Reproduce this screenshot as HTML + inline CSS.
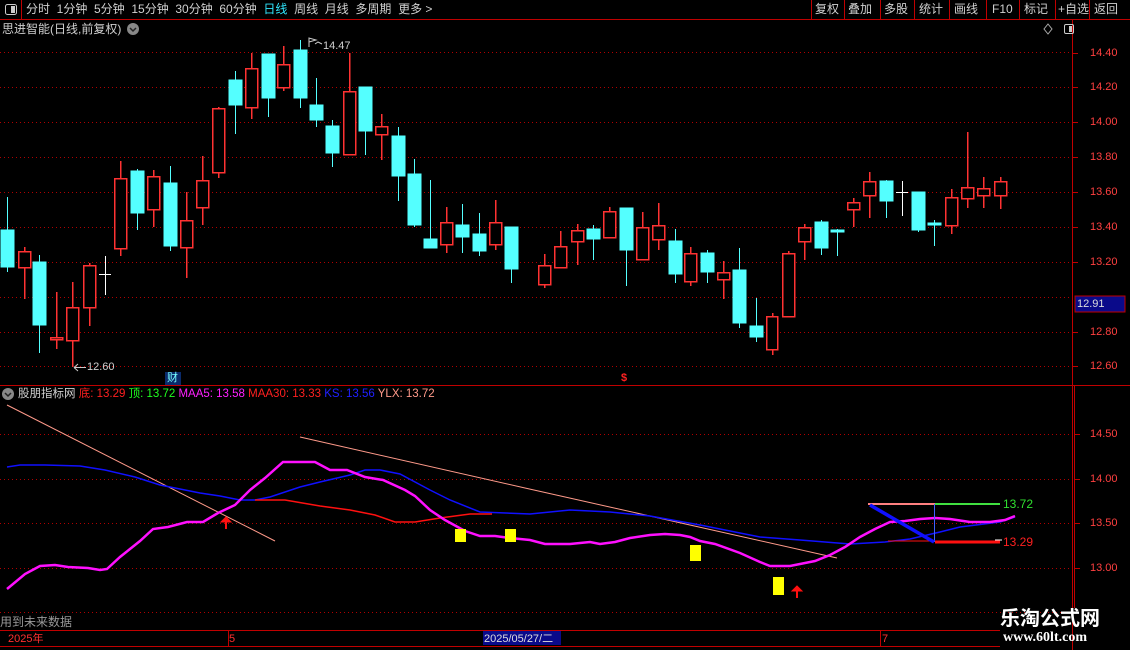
<!DOCTYPE html>
<html><head><meta charset="utf-8"><style>
body{margin:0;background:#000;width:1130px;height:650px;overflow:hidden;position:relative;font-family:"Liberation Sans","Noto Sans CJK SC",sans-serif;}
.t{position:absolute;font-size:12px;color:#d0d0d0;white-space:nowrap;line-height:14px}
</style></head><body>
<svg width="1130" height="650" style="position:absolute;left:0;top:0" xmlns="http://www.w3.org/2000/svg">
<g stroke="#b00000" stroke-width="1" stroke-dasharray="1 3" shape-rendering="crispEdges">
<line x1="0" y1="52.5" x2="1072" y2="52.5"/><line x1="0" y1="87.5" x2="1072" y2="87.5"/><line x1="0" y1="122.5" x2="1072" y2="122.5"/><line x1="0" y1="157.5" x2="1072" y2="157.5"/><line x1="0" y1="192.5" x2="1072" y2="192.5"/><line x1="0" y1="227.5" x2="1072" y2="227.5"/><line x1="0" y1="262.5" x2="1072" y2="262.5"/><line x1="0" y1="297.5" x2="1072" y2="297.5"/><line x1="0" y1="332.5" x2="1072" y2="332.5"/><line x1="0" y1="366.5" x2="1072" y2="366.5"/>
<line x1="0" y1="434.5" x2="1072" y2="434.5"/><line x1="0" y1="479.5" x2="1072" y2="479.5"/><line x1="0" y1="523.5" x2="1072" y2="523.5"/><line x1="0" y1="568.5" x2="1072" y2="568.5"/><line x1="0" y1="612.5" x2="1072" y2="612.5"/>
</g>
<g stroke="#c00000" stroke-width="1" shape-rendering="crispEdges">
<line x1="0" y1="19.5" x2="1130" y2="19.5"/>
<line x1="0" y1="385.5" x2="1130" y2="385.5"/>
<line x1="0" y1="630.5" x2="1000" y2="630.5"/>
<line x1="0" y1="646.5" x2="1000" y2="646.5"/>
<line x1="1072.5" y1="19" x2="1072.5" y2="650"/>
<line x1="1074.5" y1="385" x2="1074.5" y2="608"/>
<line x1="21.5" y1="0" x2="21.5" y2="19"/>
<line x1="811.5" y1="0" x2="811.5" y2="19"/><line x1="844.5" y1="0" x2="844.5" y2="19"/><line x1="880.5" y1="0" x2="880.5" y2="19"/><line x1="914.5" y1="0" x2="914.5" y2="19"/><line x1="949.5" y1="0" x2="949.5" y2="19"/><line x1="986.5" y1="0" x2="986.5" y2="19"/><line x1="1019.5" y1="0" x2="1019.5" y2="19"/><line x1="1055.5" y1="0" x2="1055.5" y2="19"/><line x1="1089.5" y1="0" x2="1089.5" y2="19"/>
</g>
<g stroke="#c00000" shape-rendering="crispEdges">
<line x1="1072" y1="53.5" x2="1078" y2="53.5"/><line x1="1072" y1="87.5" x2="1078" y2="87.5"/><line x1="1072" y1="122.5" x2="1078" y2="122.5"/><line x1="1072" y1="157.5" x2="1078" y2="157.5"/><line x1="1072" y1="192.5" x2="1078" y2="192.5"/><line x1="1072" y1="227.5" x2="1078" y2="227.5"/><line x1="1072" y1="262.5" x2="1078" y2="262.5"/><line x1="1072" y1="332.5" x2="1078" y2="332.5"/><line x1="1072" y1="366.5" x2="1078" y2="366.5"/>
<line x1="1074" y1="434.5" x2="1080" y2="434.5"/><line x1="1074" y1="479.5" x2="1080" y2="479.5"/><line x1="1074" y1="523.5" x2="1080" y2="523.5"/><line x1="1074" y1="568.5" x2="1080" y2="568.5"/>
<line x1="228.5" y1="630" x2="228.5" y2="646"/><line x1="880.5" y1="630" x2="880.5" y2="646"/>
</g>
<g stroke-width="1" shape-rendering="crispEdges">
<g stroke="#54ffff" fill="#54ffff">
<line x1="7.5" y1="197" x2="7.5" y2="272"/><rect x="1" y="230" width="13" height="37"/>
<line x1="39.5" y1="255" x2="39.5" y2="353"/><rect x="33" y="262" width="13" height="63"/>
<line x1="137.5" y1="169" x2="137.5" y2="230"/><rect x="131" y="171" width="13" height="42"/>
<line x1="170.5" y1="166" x2="170.5" y2="251"/><rect x="164" y="183" width="13" height="63"/>
<line x1="235.5" y1="71" x2="235.5" y2="134"/><rect x="229" y="80" width="13" height="25"/>
<line x1="268.5" y1="54" x2="268.5" y2="117"/><rect x="262" y="54" width="13" height="44"/>
<line x1="300.5" y1="40" x2="300.5" y2="108"/><rect x="294" y="50" width="13" height="48"/>
<line x1="316.5" y1="78" x2="316.5" y2="127"/><rect x="310" y="105" width="13" height="15"/>
<line x1="332.5" y1="120" x2="332.5" y2="167"/><rect x="326" y="126" width="13" height="27"/>
<line x1="365.5" y1="87" x2="365.5" y2="155"/><rect x="359" y="87" width="13" height="44"/>
<line x1="398.5" y1="127" x2="398.5" y2="201"/><rect x="392" y="136" width="13" height="40"/>
<line x1="414.5" y1="159" x2="414.5" y2="227"/><rect x="408" y="174" width="13" height="51"/>
<line x1="430.5" y1="180" x2="430.5" y2="248"/><rect x="424" y="239" width="13" height="9"/>
<line x1="462.5" y1="204" x2="462.5" y2="253"/><rect x="456" y="225" width="13" height="12"/>
<line x1="479.5" y1="213" x2="479.5" y2="256"/><rect x="473" y="234" width="13" height="17"/>
<line x1="511.5" y1="227" x2="511.5" y2="283"/><rect x="505" y="227" width="13" height="42"/>
<line x1="593.5" y1="225" x2="593.5" y2="260"/><rect x="587" y="229" width="13" height="10"/>
<line x1="626.5" y1="208" x2="626.5" y2="286"/><rect x="620" y="208" width="13" height="42"/>
<line x1="675.5" y1="229" x2="675.5" y2="283"/><rect x="669" y="241" width="13" height="33"/>
<line x1="707.5" y1="250" x2="707.5" y2="283"/><rect x="701" y="253" width="13" height="19"/>
<line x1="739.5" y1="248" x2="739.5" y2="328"/><rect x="733" y="270" width="13" height="53"/>
<line x1="756.5" y1="298" x2="756.5" y2="342"/><rect x="750" y="326" width="13" height="11"/>
<line x1="821.5" y1="220" x2="821.5" y2="255"/><rect x="815" y="222" width="13" height="26"/>
<line x1="837.5" y1="229" x2="837.5" y2="256"/><rect x="831" y="230" width="13" height="2"/>
<line x1="886.5" y1="180" x2="886.5" y2="218"/><rect x="880" y="181" width="13" height="20"/>
<line x1="918.5" y1="192" x2="918.5" y2="232"/><rect x="912" y="192" width="13" height="38"/>
<line x1="934.5" y1="220" x2="934.5" y2="246"/><rect x="928" y="223" width="13" height="2"/>
</g>
<g stroke="#ff3232" fill="#000" stroke-width="1.5">
<line x1="24.5" y1="247" x2="24.5" y2="299"/><rect x="18.5" y="251.5" width="12" height="16"/>
<line x1="56.5" y1="292" x2="56.5" y2="349"/><rect x="50.5" y="337.5" width="12" height="2"/>
<line x1="72.5" y1="282" x2="72.5" y2="367"/><rect x="66.5" y="307.5" width="12" height="33"/>
<line x1="89.5" y1="263" x2="89.5" y2="326"/><rect x="83.5" y="265.5" width="12" height="42"/>
<line x1="120.5" y1="161" x2="120.5" y2="256"/><rect x="114.5" y="178.5" width="12" height="70"/>
<line x1="153.5" y1="170" x2="153.5" y2="227"/><rect x="147.5" y="176.5" width="12" height="33"/>
<line x1="186.5" y1="192" x2="186.5" y2="278"/><rect x="180.5" y="220.5" width="12" height="27"/>
<line x1="202.5" y1="156" x2="202.5" y2="225"/><rect x="196.5" y="180.5" width="12" height="27"/>
<line x1="218.5" y1="107" x2="218.5" y2="178"/><rect x="212.5" y="108.5" width="12" height="64"/>
<line x1="251.5" y1="53" x2="251.5" y2="119"/><rect x="245.5" y="68.5" width="12" height="39"/>
<line x1="283.5" y1="46" x2="283.5" y2="91"/><rect x="277.5" y="64.5" width="12" height="23"/>
<line x1="349.5" y1="53" x2="349.5" y2="154"/><rect x="343.5" y="91.5" width="12" height="63"/>
<line x1="381.5" y1="114" x2="381.5" y2="160"/><rect x="375.5" y="126.5" width="12" height="8"/>
<line x1="446.5" y1="207" x2="446.5" y2="253"/><rect x="440.5" y="222.5" width="12" height="22"/>
<line x1="495.5" y1="200" x2="495.5" y2="250"/><rect x="489.5" y="222.5" width="12" height="22"/>
<line x1="544.5" y1="254" x2="544.5" y2="288"/><rect x="538.5" y="265.5" width="12" height="19"/>
<line x1="560.5" y1="231" x2="560.5" y2="267"/><rect x="554.5" y="246.5" width="12" height="21"/>
<line x1="577.5" y1="224" x2="577.5" y2="265"/><rect x="571.5" y="230.5" width="12" height="11"/>
<line x1="609.5" y1="207" x2="609.5" y2="237"/><rect x="603.5" y="211.5" width="12" height="26"/>
<line x1="642.5" y1="212" x2="642.5" y2="259"/><rect x="636.5" y="227.5" width="12" height="32"/>
<line x1="658.5" y1="203" x2="658.5" y2="250"/><rect x="652.5" y="225.5" width="12" height="14"/>
<line x1="690.5" y1="247" x2="690.5" y2="286"/><rect x="684.5" y="253.5" width="12" height="28"/>
<line x1="723.5" y1="261" x2="723.5" y2="299"/><rect x="717.5" y="272.5" width="12" height="7"/>
<line x1="772.5" y1="313" x2="772.5" y2="355"/><rect x="766.5" y="316.5" width="11" height="33"/>
<line x1="788.5" y1="251" x2="788.5" y2="316"/><rect x="782.5" y="253.5" width="12" height="63"/>
<line x1="804.5" y1="224" x2="804.5" y2="260"/><rect x="798.5" y="227.5" width="12" height="14"/>
<line x1="853.5" y1="198" x2="853.5" y2="227"/><rect x="847.5" y="202.5" width="12" height="7"/>
<line x1="869.5" y1="172" x2="869.5" y2="218"/><rect x="863.5" y="181.5" width="12" height="14"/>
<line x1="951.5" y1="189" x2="951.5" y2="234"/><rect x="945.5" y="197.5" width="12" height="28"/>
<line x1="967.5" y1="132" x2="967.5" y2="208"/><rect x="961.5" y="187.5" width="12" height="11"/>
<line x1="983.5" y1="177" x2="983.5" y2="208"/><rect x="977.5" y="188.5" width="12" height="7"/>
<line x1="1000.5" y1="177" x2="1000.5" y2="209"/><rect x="994.5" y="181.5" width="12" height="14"/>
</g>
<g stroke="#fff">
<line x1="105.5" y1="256" x2="105.5" y2="295"/><line x1="99" y1="274.5" x2="111" y2="274.5"/>
<line x1="902.5" y1="181" x2="902.5" y2="216"/><line x1="896" y1="192.5" x2="908" y2="192.5"/>
</g>
</g>
<path d="M309 47 L309 38 L316 40 L309 42 M315 44 L318 42 L322 44" stroke="#ccc" fill="none"/>
<path d="M74 367.5 L86 367.5 M74 367.5 L78 364 M74 367.5 L78 371" stroke="#ccc" fill="none"/>
<rect x="165" y="372" width="16" height="13" fill="#0a2a6a"/>
<g fill="none">
<polyline stroke="#ff9a8a" points="7,405 275,541"/>
<polyline stroke="#ff9a8a" points="300,437 525,488 837,558"/>
<polyline stroke="#1010ff" stroke-width="1.5" points="7,467 20,465 45,465 80,466 105,470 135,477 160,485 175,488 200,493 220,496 240,500 255,500 270,497 300,487 320,482 350,475 365,470 380,470 400,474 430,490 450,500 480,512 530,514 570,510 610,512 650,516 700,525 760,537 800,540 850,544 885,542 910,539 940,532 960,527 1000,522 1015,517"/>
<polyline stroke="#ff1010" stroke-width="1.5" points="255,500 285,500 320,506 350,510 375,515 395,522 415,522 440,518 470,514 492,514"/>
<polyline stroke="#ff10ff" stroke-width="2.5" points="7,589 25,574 40,566 55,565 68,567 88,568 100,570 107,569 120,557 140,541 153,529 168,527 187,522 203,522 218,513 235,505 250,490 265,478 283,462 315,462 330,470 347,470 365,477 383,480 405,490 415,496 430,510 445,520 465,531 480,536 495,536 510,538 530,540 545,544 570,544 590,542 600,544 615,542 630,538 650,535 665,534 680,535 690,537 700,541 715,544 740,553 760,562 770,566 790,566 805,563 815,561 830,555 845,547 860,537 875,529 890,522 905,521 920,519 935,518 950,519 970,522 990,522 1005,520 1015,516"/>
<line x1="868" y1="504" x2="935" y2="504" stroke="#ff8080" stroke-width="2"/>
<line x1="935" y1="504" x2="1000" y2="504" stroke="#40e040" stroke-width="2"/>
<line x1="935" y1="542" x2="1000" y2="542" stroke="#ff1010" stroke-width="3"/>
<line x1="888" y1="541" x2="935" y2="541" stroke="#ff1010" stroke-width="1"/>
<line x1="934.5" y1="504" x2="934.5" y2="542" stroke="#4060ff"/>
<line x1="870" y1="505" x2="934" y2="542" stroke="#1010ff" stroke-width="3.5"/>
<line x1="995" y1="540" x2="1002" y2="540" stroke="#fff"/>
</g>
<g fill="#ffff00">
<rect x="455" y="529" width="11" height="13"/><rect x="505" y="529" width="11" height="13"/><rect x="690" y="545" width="11" height="16"/><rect x="773" y="577" width="11" height="18"/>
</g>
<g fill="#ff1010" stroke="#ff1010">
<path d="M226 517 L231 522 L221 522 Z"/><line x1="226" y1="521" x2="226" y2="529" stroke-width="2"/>
<path d="M797 586 L802 591 L792 591 Z"/><line x1="797" y1="590" x2="797" y2="598" stroke-width="2"/>
</g>
<rect x="5.5" y="4.5" width="11" height="10" rx="2" fill="none" stroke="#ccc"/><rect x="11" y="6" width="4" height="7" fill="#ccc"/>
<rect x="1064.5" y="24.5" width="9" height="9" rx="1.5" fill="none" stroke="#ccc"/><rect x="1069" y="26" width="3" height="6" fill="#ccc"/>
<path d="M1048 24 L1052 29 L1048 34 L1044 29 Z" fill="none" stroke="#aaa"/>
<circle cx="133" cy="29" r="6" fill="#888"/><path d="M130 28 L133 31 L136 28" stroke="#222" fill="none" stroke-width="1.5"/>
<circle cx="8" cy="394" r="6" fill="#888"/><path d="M5 393 L8 396 L11 393" stroke="#222" fill="none" stroke-width="1.5"/>
<rect x="1075" y="296" width="50" height="16" fill="#0a0a8a" stroke="#c00000"/>
<rect x="483" y="631" width="78" height="14" fill="#0a0a8a"/>
</svg>
<div class="t" style="left:26px;top:2px;font-size:12px">分时 &nbsp;1分钟 &nbsp;5分钟 &nbsp;15分钟 &nbsp;30分钟 &nbsp;60分钟 &nbsp;<span style="color:#30e8ff">日线</span> &nbsp;周线 &nbsp;月线 &nbsp;多周期 &nbsp;更多 &gt;</div>
<div class="t" style="left:815px;top:2px">复权</div><div class="t" style="left:848px;top:2px">叠加</div><div class="t" style="left:884px;top:2px">多股</div><div class="t" style="left:919px;top:2px">统计</div><div class="t" style="left:954px;top:2px">画线</div><div class="t" style="left:992px;top:2px">F10</div><div class="t" style="left:1024px;top:2px">标记</div><div class="t" style="left:1058px;top:2px">+自选</div><div class="t" style="left:1094px;top:2px">返回</div>
<div class="t" style="left:2px;top:22px">思进智能(日线,前复权)</div>
<div class="t" style="left:323px;top:39px;font-size:11px">14.47</div>
<div class="t" style="left:87px;top:360px;font-size:11px">12.60</div>
<div class="t" style="left:167px;top:371px;font-size:11px;color:#7ff">财</div>
<div class="t" style="left:621px;top:371px;font-size:11px;color:#f22;font-weight:bold">$</div>
<div class="t" style="left:1090px;top:46px;color:#ff4040;font-size:11px">14.40</div>
<div class="t" style="left:1090px;top:80px;color:#ff4040;font-size:11px">14.20</div>
<div class="t" style="left:1090px;top:115px;color:#ff4040;font-size:11px">14.00</div>
<div class="t" style="left:1090px;top:150px;color:#ff4040;font-size:11px">13.80</div>
<div class="t" style="left:1090px;top:185px;color:#ff4040;font-size:11px">13.60</div>
<div class="t" style="left:1090px;top:220px;color:#ff4040;font-size:11px">13.40</div>
<div class="t" style="left:1090px;top:255px;color:#ff4040;font-size:11px">13.20</div>
<div class="t" style="left:1077px;top:297px;color:#ddd;font-size:11px">12.91</div>
<div class="t" style="left:1090px;top:325px;color:#ff4040;font-size:11px">12.80</div>
<div class="t" style="left:1090px;top:359px;color:#ff4040;font-size:11px">12.60</div>
<div class="t" style="left:1090px;top:427px;color:#ff4040;font-size:11px">14.50</div>
<div class="t" style="left:1090px;top:472px;color:#ff4040;font-size:11px">14.00</div>
<div class="t" style="left:1090px;top:516px;color:#ff4040;font-size:11px">13.50</div>
<div class="t" style="left:1090px;top:561px;color:#ff4040;font-size:11px">13.00</div>
<div class="t" style="left:18px;top:387px;font-size:11.5px">股朋指标网 <span style="color:#ff2020">底: 13.29</span> <span style="color:#20ff20">顶: 13.72</span> <span style="color:#ff20ff">MAA5: 13.58</span> <span style="color:#ff2020">MAA30: 13.33</span> <span style="color:#2020ff">KS: 13.56</span> <span style="color:#ff9a8a">YLX: 13.72</span></div>
<div class="t" style="left:1003px;top:497px;color:#30e030">13.72</div>
<div class="t" style="left:1003px;top:535px;color:#ff2020">13.29</div>
<div class="t" style="left:0;top:615px;color:#999">用到未来数据</div>
<div class="t" style="left:8px;top:632px;color:#ff3030;font-size:11px">2025年</div>
<div class="t" style="left:229px;top:632px;color:#ff3030;font-size:11px">5</div>
<div class="t" style="left:484px;top:632px;color:#ddd;font-size:11px">2025/05/27/二</div>
<div class="t" style="left:882px;top:632px;color:#ff3030;font-size:11px">7</div>
<div class="t" style="left:1000px;top:608px;color:#fff;font-size:20px;font-weight:bold;line-height:22px">乐淘公式网</div>
<div class="t" style="left:1003px;top:631px;color:#fff;font-size:14px;font-weight:bold;font-family:'Liberation Serif',serif">www.60lt.com</div>
</body></html>
